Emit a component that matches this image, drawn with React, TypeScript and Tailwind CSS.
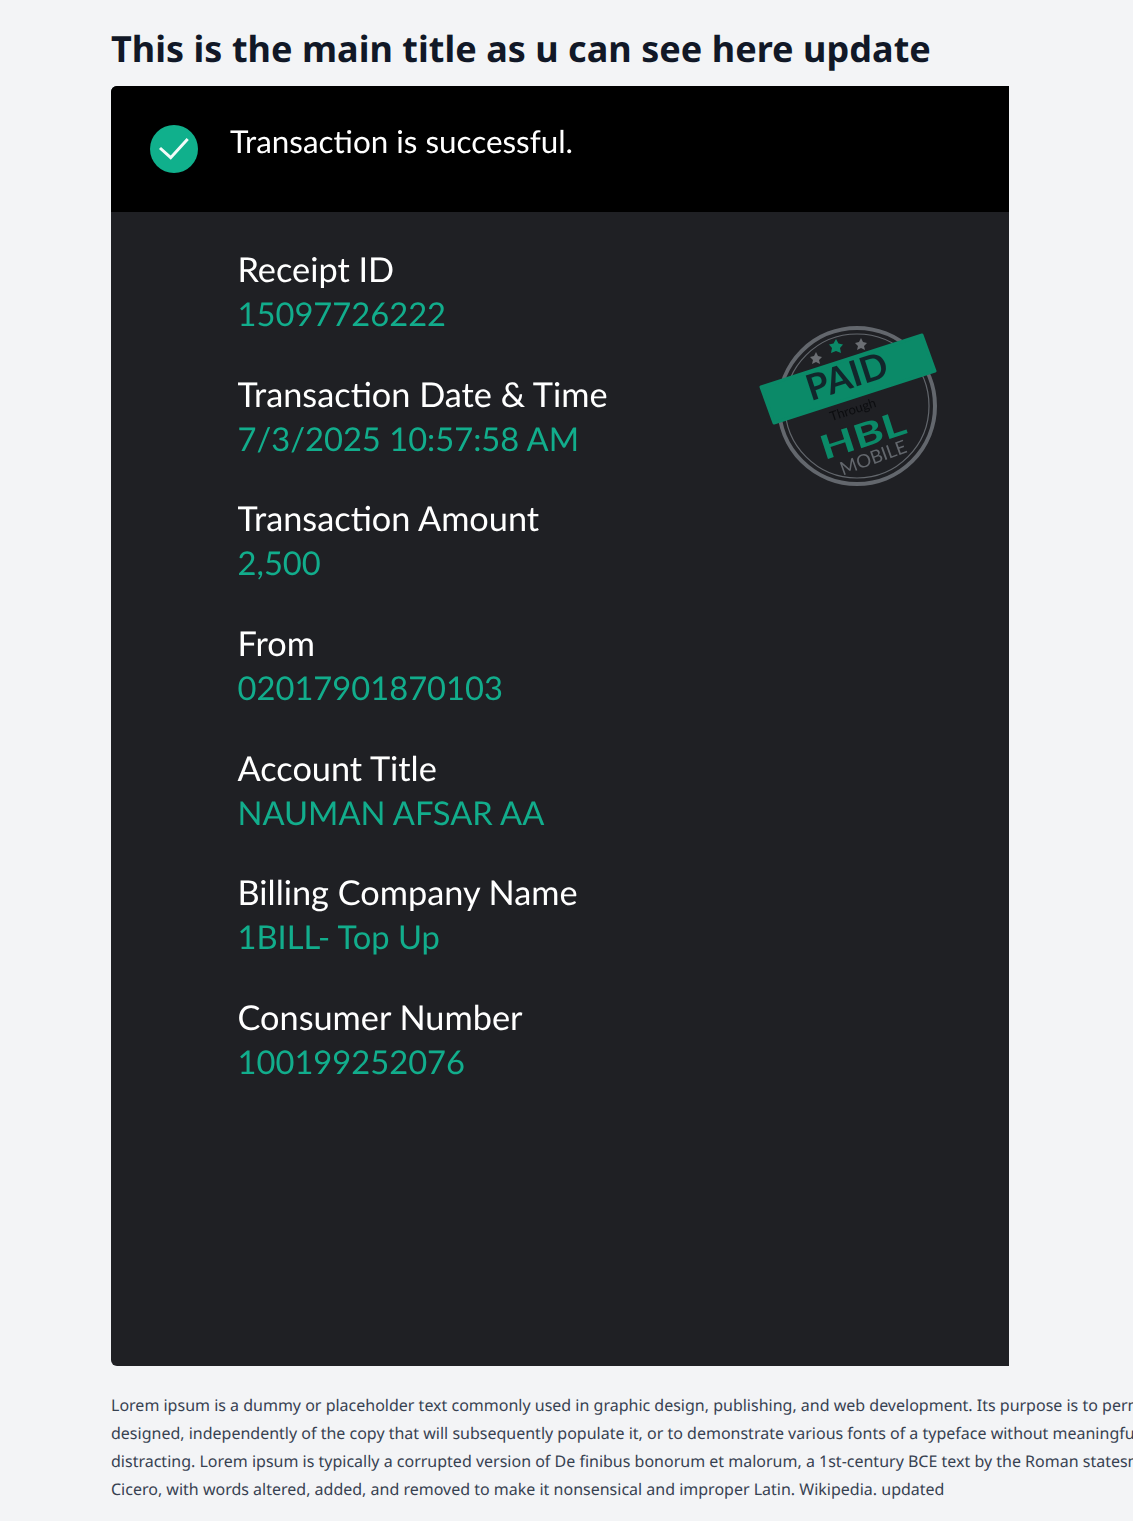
import React from "react";

const receiptFields = [
  { label: "Receipt ID", value: "15097726222" },
  { label: "Transaction Date & Time", value: "7/3/2025 10:57:58 AM" },
  { label: "Transaction Amount", value: "2,500" },
  { label: "From", value: "02017901870103" },
  { label: "Account Title", value: "NAUMAN AFSAR AA" },
  { label: "Billing Company Name", value: "1BILL- Top Up" },
  { label: "Consumer Number", value: "100199252076" },
];

const PaidStamp = () => (
  <svg className="absolute left-[629px] top-[224px] blur-[0.4px]" width="210" height="190" viewBox="0 0 210 190">
    <circle cx="117" cy="96" r="78" fill="none" stroke="#63676d" strokeWidth="4" />
    <circle cx="117" cy="96" r="72" fill="none" stroke="#63676d" strokeWidth="1.2" />
    <polygon points="76,42 78,46 82,47 79,50 80,54 76,52 72,54 73,50 70,47 74,46" fill="#6b6e73" />
    <polygon points="96,29 98.500,33.500 103,34.500 100,38 101,43 96,41 91,43 92,38 89,34.500 93.500,33.500" fill="#0b8a68" />
    <polygon points="121,28 123,32 127,33 124,36 125,40 121,38 117,40 118,36 115,33 119,32" fill="#6b6e73" />
    <polygon points="21,77 182,25 195,61 34,113" fill="#0b8a68" stroke="#0b8a68" strokeWidth="3" strokeLinejoin="round" />
    <g style={{ fontFamily: '"Lato", sans-serif' }}>
      <text x="107" y="79" textAnchor="middle" fontSize="36" fontWeight="700" fill="#12262b" transform="rotate(-18 107 67)">PAID</text>
      <text x="113" y="104" textAnchor="middle" fontSize="13" fill="#0c0d10" transform="rotate(-18 113 100)">Through</text>
      <text x="123" y="137" textAnchor="middle" fontSize="33" fontWeight="700" fill="#0b8a68" textLength="88" lengthAdjust="spacingAndGlyphs" transform="rotate(-18 123 126)">HBL</text>
      <text x="133" y="154" textAnchor="middle" fontSize="18.500" fill="#63676d" transform="rotate(-20 133 147)">MOBILE</text>
    </g>
  </svg>
);

const App = () => {
  return (
    <div className="min-h-[1521px] overflow-hidden bg-[#f3f4f6] pl-[111px] font-['Noto_Sans',sans-serif] [text-rendering:geometricPrecision]">
      <h1 className="pt-[29px] pb-[17px] text-4xl font-bold tracking-[0.04px] text-[#111827] whitespace-nowrap">
        This is the main title as u can see here update
      </h1>

      <div className="relative h-[1280px] w-[898px] overflow-hidden rounded-l-md bg-[#1f2024] font-['Lato',sans-serif]">
        {/* Success banner */}
        <div className="flex h-[126px] items-start bg-black pl-[39px] pt-[39px]">
          <div className="flex h-12 w-12 items-center justify-center rounded-full bg-[#10b08c]">
            <svg width="32" height="32" viewBox="0 0 32 32" fill="none" stroke="#f4fbf9" strokeWidth="3">
              <polyline points="2,15 12.700,24.700 29.700,6" />
            </svg>
          </div>
          <p className="ml-[32px] -mt-[8px] text-[31.400px] leading-[48px] text-white blur-[0.3px]">Transaction is successful.</p>
        </div>

        {/* Receipt fields */}
        <div className="flex flex-col gap-[37.700px] pl-[126.500px] pt-[36px] blur-[0.3px]">
          {receiptFields.map((field) => (
            <div key={field.label} className="flex flex-col">
              <span className="text-[34.300px] leading-[44px] text-white">{field.label}</span>
              <span className="text-[32.700px] leading-[43px] text-[#12ad8c]">{field.value}</span>
            </div>
          ))}
        </div>

        <PaidStamp />
      </div>

      <p className="mt-[25px] w-[1200px] text-base leading-7 text-[#374151]">
        Lorem ipsum is a dummy or placeholder text commonly used in graphic design, publishing, and web development. Its purpose is to permit a page layout to be designed, independently of the copy that will subsequently populate it, or to demonstrate various fonts of a typeface without meaningful text that could be distracting. Lorem ipsum is typically a corrupted version of De finibus bonorum et malorum, a 1st-century BCE text by the Roman statesman and philosopher Cicero, with words altered, added, and removed to make it nonsensical and improper Latin. Wikipedia. updated
      </p>
    </div>
  );
};

export default App;
